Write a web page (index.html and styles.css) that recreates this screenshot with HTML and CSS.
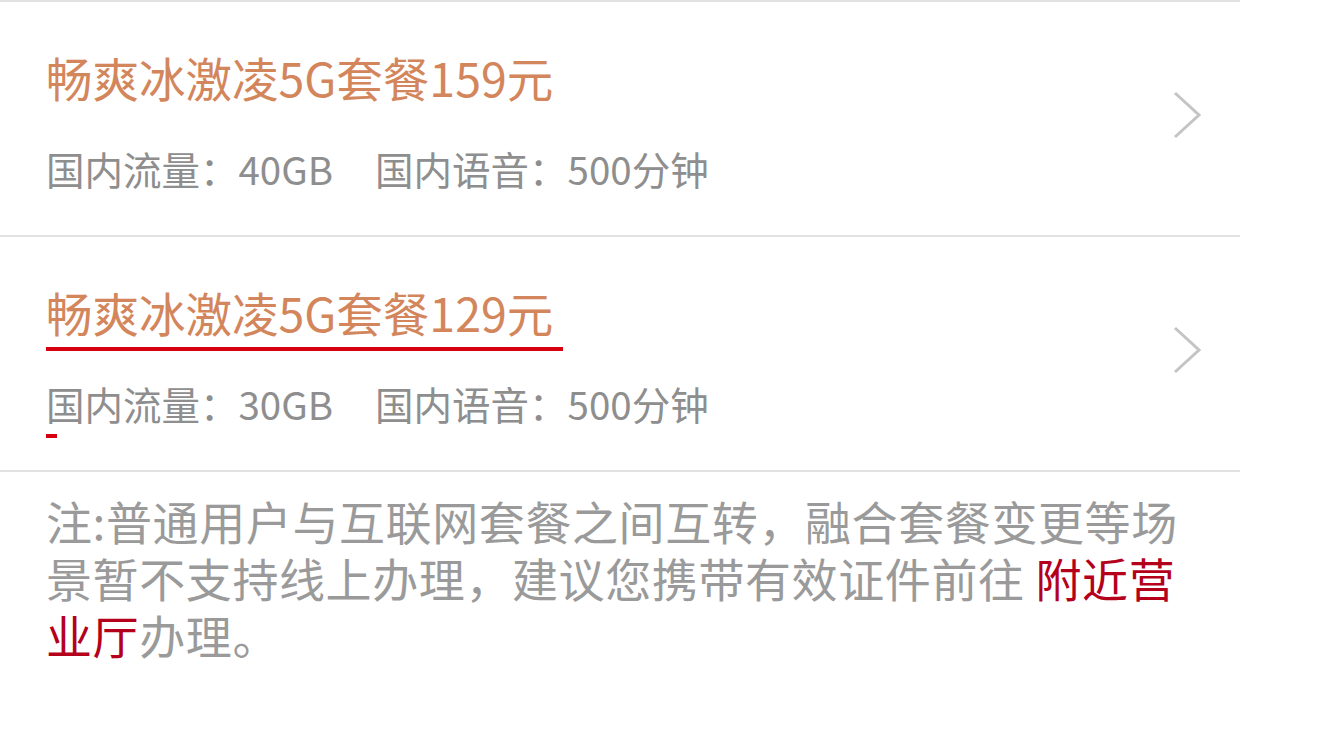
FILE: index.html
```html
<!DOCTYPE html>
<html lang="zh-CN">
<head>
    <meta charset="UTF-8">
    <meta name="viewport" content="width=device-width, initial-scale=1.0">
    <title>套餐变更</title>
    <link rel="stylesheet" href="styles.css">
</head>

<body>
    <div class="page">
        <ul class="plan-list">
            <li class="plan">
                <div class="plan-info">
                    <h3 class="plan-name">畅爽冰激凌5G套餐159元</h3>
                    <p class="plan-detail">
                        <span>国内流量：40GB</span>
                        <span>国内语音：500分钟</span>
                    </p>
                </div>
                <svg class="plan-arrow" viewBox="0 0 30 50" width="30" height="50">
                    <polyline points="3,3 27,25 3,47" />
                </svg>
            </li>
            <li class="plan plan--active">
                <div class="plan-info">
                    <h3 class="plan-name">畅爽冰激凌5G套餐129元</h3>
                    <p class="plan-detail">
                        <span>国内流量：30GB</span>
                        <span>国内语音：500分钟</span>
                    </p>
                </div>
                <svg class="plan-arrow" viewBox="0 0 30 50" width="30" height="50">
                    <polyline points="3,3 27,25 3,47" />
                </svg>
            </li>
        </ul>

        <p class="note">注:普通用户与互联网套餐之间互转，融合套餐变更等场景暂不支持线上办理，建议您携带有效证件前往 <a class="shop-link" href="#">附近营业厅</a>办理。</p>
    </div>
</body>
</html>
```

FILE: styles.css
```css
body {
    margin: 0;
    background-color: #fff;
    font-family: "Noto Sans CJK SC", "Noto Sans", sans-serif;
}
.page {
    width: 1240px;
}
.plan-list {
    list-style: none;
    margin: 0;
    padding: 0;
    border-top: 2px solid #e2e2e2;
}
.plan {
    display: flex;
    align-items: center;
    padding: 47px 38px 42px 46px;
    border-bottom: 2px solid #e2e2e2;
}
.plan-info {
    flex: 1;
}
.plan-name {
    position: relative;
    display: inline-block;
    margin: 0;
    font-size: 46.5px;
    font-weight: normal;
    line-height: 56px;
    color: #d3865b;
}
.plan-detail {
    position: relative;
    display: flex;
    gap: 42px;
    margin: 38px 0 0;
    font-size: 38.5px;
    line-height: 50px;
    color: #8e8e8e;
}
/* 选中的套餐：标题下划红线 */
.plan--active .plan-name::after {
    content: "";
    position: absolute;
    left: 0;
    right: -10px;
    bottom: -11px;
    height: 4px;
    background-color: #d6000f;
}
.plan--active .plan-detail::after {
    content: "";
    position: absolute;
    left: 0;
    bottom: -10px;
    width: 11px;
    height: 4px;
    background-color: #d6000f;
}
.plan-arrow {
    margin-bottom: 12px;
    fill: none;
    stroke: #c4c4c4;
    stroke-width: 3;
}
.note {
    margin: 0;
    padding: 20px 34px 0 46px;
    font-size: 46px;
    letter-spacing: 0.6px;
    line-height: 57px;
    color: #9a9a9a;
}
.shop-link {
    color: #b5001c;
    text-decoration: none;
}
```
